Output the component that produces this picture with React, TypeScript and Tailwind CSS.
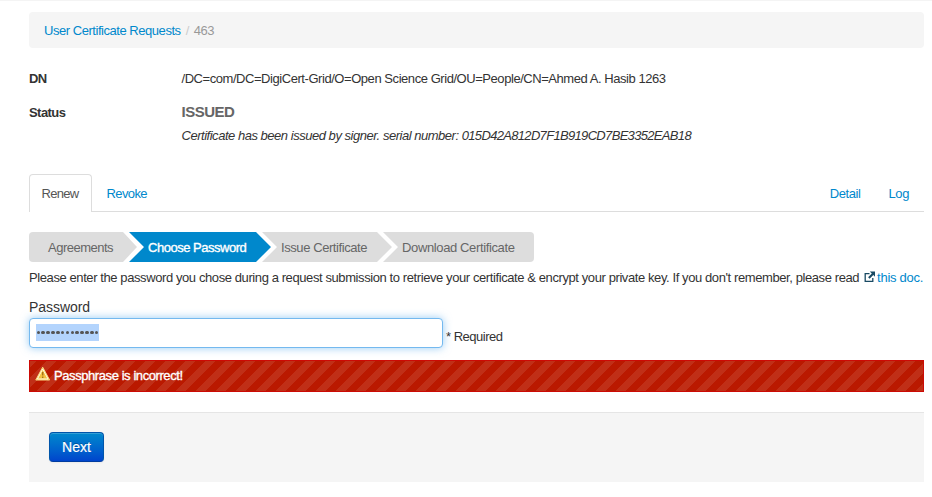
import React from "react";

const steps = [
  {
    label: "Agreements",
    box: "w-[108px] rounded-l bg-[#ddd] text-[#666] [clip-path:polygon(0_0,94px_0,100%_50%,94px_100%,0_100%)]",
    text: "tracking-[-0.5px]",
  },
  {
    label: "Choose Password",
    box: "-ml-2 w-[142px] bg-[#0088cc] text-white [clip-path:polygon(0_0,127px_0,100%_50%,127px_100%,0_100%,15px_50%)]",
    text: "tracking-[-0.48px] [-webkit-text-stroke:0.35px_white]",
  },
  {
    label: "Issue Certificate",
    box: "-ml-[9px] w-[130px] bg-[#ddd] text-[#666] [clip-path:polygon(0_0,115px_0,100%_50%,115px_100%,0_100%,15px_50%)]",
    text: "tracking-[-0.42px]",
  },
  {
    label: "Download Certificate",
    box: "-ml-[9px] w-[151px] rounded-r bg-[#ddd] text-[#666] [clip-path:polygon(0_0,100%_0,100%_100%,0_100%,15px_50%)]",
    text: "tracking-[-0.37px]",
  },
];

function WarningIcon() {
  return (
    <svg width="16" height="16" viewBox="0 0 16 16" className="-mt-1">
      <path d="M7.7 1.2 14.6 14H.8Z" fill="#f2c13d" stroke="#f8dc83" strokeWidth="1" strokeLinejoin="round" />
      <path d="M7.7 3 13 13H2.4Z" fill="#f3c242" stroke="#fffbe0" strokeWidth="1" strokeLinejoin="round" />
      <path d="M7.7 6v3.6M7.7 10.6v1.5" stroke="#a57418" strokeWidth="1.4" />
    </svg>
  );
}

function ExternalIcon() {
  return (
    <svg width="12" height="12" viewBox="0 0 12 12" fill="none" className="mr-px mb-[3px] inline-block align-middle">
      <path d="M5.5 2.6H1.2v7.7h7.6V7" stroke="#194a63" strokeWidth="1.3" />
      <path d="M5.8 0.6h5.2v5.2L9.3 4.1 5.6 7.8 4.1 6.3 7.8 2.6Z" fill="#194a63" />
    </svg>
  );
}

export default function App() {
  return (
    <div className="h-[497px] overflow-hidden border-t border-[#f4f4f4] bg-white pt-[11px] pr-2 pl-[29px] font-['Liberation_Sans',Arial,sans-serif] text-[13px] leading-5 tracking-[-0.42px] whitespace-nowrap text-[#333]">
      <nav className="flex h-9 items-center rounded bg-[#f5f5f5] px-[15px] pt-px tracking-[-0.46px]">
        <a className="text-[#0088cc]">User Certificate Requests</a>
        <span className="px-[5px] text-[#ccc]">/</span>
        <span className="text-[#999]">463</span>
      </nav>

      <dl className="mt-[21px] grid grid-cols-[152.5px_1fr]">
        <dt className="font-bold tracking-[-0.6px]">DN</dt>
        <dd className="tracking-[-0.445px]">/DC=com/DC=DigiCert-Grid/O=Open Science Grid/OU=People/CN=Ahmed A. Hasib 1263</dd>
        <dt className="mt-[14px] font-bold tracking-[-0.55px]">Status</dt>
        <dd className="mt-[13px]">
          <div className="text-[15px] font-bold tracking-[-0.5px] text-[#666]">ISSUED</div>
          <div className="mt-1 tracking-[-0.475px] italic">
            Certificate has been issued by signer. serial number: <span className="tracking-[-0.675px]">015D42A812D7F1B919CD7BE3352EAB18</span>
          </div>
        </dd>
      </dl>

      <div className="mt-7 flex h-[38px] border-b border-[#ddd]">
        <div className="h-[38px] w-[63px] rounded-t border border-b-0 border-[#ddd] bg-white pt-[9px] pl-[11.5px] tracking-[-0.7px] text-[#555]">Renew</div>
        <div className="pt-[10px] pl-[14.5px] tracking-[-0.6px] text-[#0088cc]">Revoke</div>
        <div className="mr-[15px] ml-auto flex gap-7 pt-[10px] text-[#0088cc]">
          <span>Detail</span>
          <span>Log</span>
        </div>
      </div>

      <div className="mt-5 flex h-[30px]">
        {steps.map((s) => (
          <div key={s.label} className={`flex h-[30px] shrink-0 items-center pt-px pl-[19px] ${s.box}`}>
            <span className={s.text}>{s.label}</span>
          </div>
        ))}
      </div>

      <p className="mt-[6px] flex h-5 items-center">
        <span className="tracking-[-0.407px]">Please enter the password you chose during a request submission to retrieve your certificate &amp; encrypt your private key. If you don't remember, please read</span>
        <a className="mr-px ml-auto tracking-[-0.28px] text-[#0088cc]"><ExternalIcon />this doc.</a>
      </p>

      <label className="mt-[9px] block h-[21px] text-[14px] tracking-[-0.05px]">Password</label>
      <div className="flex h-[30px]">
        <div className="flex w-[414px] items-start rounded border border-[#74b9ef] bg-white pt-[5px] pl-[6px] shadow-[0_0_8px_rgba(82,168,236,0.6)]">
          <div className="flex h-[17px] w-[63px] items-center justify-around bg-[#b3d4fd]">
            {Array.from({ length: 13 }, (_, i) => (
              <i key={i} className="size-[3.6px] rounded-full bg-[#555]" />
            ))}
          </div>
        </div>
        <span className="mt-[9px] ml-[3px] tracking-[-0.5px]">* Required</span>
      </div>

      <div className="mt-3 flex h-8 items-center gap-[3px] border border-[#cc0a05] bg-[repeating-linear-gradient(135deg,#c02f17_0,#c02f17_4.243px,#ba1900_4.243px,#ba1900_11.314px,#c02f17_11.314px,#c02f17_14.142px)] pl-[5px] text-white">
        <WarningIcon />
        <span className="[-webkit-text-stroke:0.35px_white]">Passphrase is incorrect!</span>
      </div>

      <div className="mt-5 h-[70px] border-t border-[#e5e5e5] bg-[#f5f5f5] pt-[19px] pl-5">
        <button className="block h-[30px] w-[55px] rounded border border-[#0055aa] border-b-[#003ba0] bg-linear-to-b from-[#0088cc] to-[#0044cc] text-[14px] leading-5 tracking-normal text-white shadow-[inset_0_1px_0_rgba(255,255,255,0.2),0_1px_2px_rgba(0,0,0,0.05)] [-webkit-text-stroke:0.2px_white] [text-shadow:0_-1px_0_rgba(0,0,0,0.25)]">
          Next
        </button>
      </div>
    </div>
  );
}
